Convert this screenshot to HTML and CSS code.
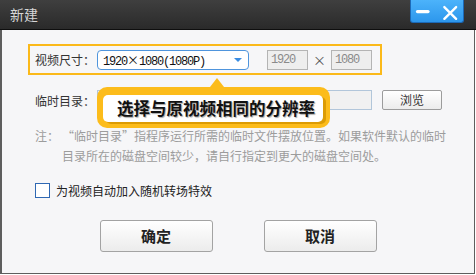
FILE: index.html
```html
<!DOCTYPE html>
<html lang="zh-CN">
<head>
<meta charset="utf-8">
<title>新建</title>
<link rel="stylesheet" href="styles.css">
</head>
<body>
<div class="window">
  <div class="titlebar">
    <span class="title">新建</span>
    <div class="winbtns">
      <svg width="54" height="23" viewBox="0 0 54 23">
        <rect x="6" y="10" width="14" height="3.2" rx="1.6" fill="#fff"/>
        <path d="M35 7 L47 19 M47 7 L35 19" stroke="#fff" stroke-width="2.4" stroke-linecap="round"/>
      </svg>
    </div>
  </div>
  <div class="content">
    <div class="size-row">
      <span class="label">视频尺寸：</span>
      <div class="select">
        <span class="mono">1920<span class="times">×</span>1080(1080P)</span>
        <span class="arrow"></span>
      </div>
      <div class="num mono">1920</div>
      <span class="x-sign">×</span>
      <div class="num mono">1080</div>
    </div>
    <div class="dir-row">
      <span class="label">临时目录：</span>
      <div class="dir-input"></div>
      <div class="browse">浏览</div>
    </div>
    <div class="note">
      <span class="note-label">注：</span>
      <p class="note-text">“临时目录”指程序运行所需的临时文件摆放位置。如果软件默认的临时<br>目录所在的磁盘空间较少，请自行指定到更大的磁盘空间处。</p>
    </div>
    <label class="check-row">
      <span class="checkbox"></span>
      <span>为视频自动加入随机转场特效</span>
    </label>
    <div class="actions">
      <div class="btn">确定</div>
      <div class="btn">取消</div>
    </div>
    <div class="callout">
      <div class="callout-inner">选择与原视频相同的分辨率</div>
    </div>
  </div>
</div>
</body>
</html>
```
FILE: styles.css
```css
* { box-sizing: border-box; }
html, body { margin: 0; padding: 0; background: #ffffff; }
body {
  font-family: "Noto Sans CJK SC", "Liberation Sans", sans-serif;
  font-size: 12px;
  color: #333;
}
.window { width: 476px; height: 275px; }
.titlebar {
  height: 30px;
  display: flex;
  align-items: flex-start;
  background: linear-gradient(#3f3f3f, #2a2a2a);
  border-bottom: 1px solid #0e0e0e;
}
.title {
  margin-left: 10px;
  line-height: 29px;
  font-size: 14px;
  color: #d6d6d6;
}
.winbtns {
  margin-left: auto;
  margin-right: 12px;
  width: 54px;
  height: 23px;
  background: linear-gradient(#4cb3fb, #2d97ec);
  border: 1px solid #1c6ab8;
  border-top: none;
  border-radius: 0 0 3px 3px;
  display: flex;
}
.winbtns svg { display: block; margin-left: -1px; }
.content {
  position: relative;
  width: 475px;
  height: 244px;
  background: #f6f6f8;
  border-left: 2px solid #5e5e5e;
  border-right: 1px solid #5e5e5e;
  border-bottom: 1px solid #5e5e5e;
  padding: 14px 0 0 26px;
}
.size-row {
  width: 354px;
  height: 31px;
  border: 2px solid #fbb91a;
  display: flex;
  align-items: center;
  padding-left: 5px;
}
.label { width: 62px; color: #333; white-space: nowrap; }
.mono {
  font-family: "Liberation Mono", monospace;
  letter-spacing: -1.2px;
  font-size: 12px;
}
.times {
  display: inline-block;
  width: 12px;
  text-align: center;
  letter-spacing: 0;
  font-family: "Noto Sans CJK SC", sans-serif;
}
.select {
  width: 152px;
  height: 20px;
  border: 1px solid #4f95dd;
  border-radius: 4px;
  background: #fff;
  display: flex;
  align-items: center;
  padding-left: 5px;
  color: #111;
}
.arrow {
  margin-left: auto;
  margin-right: 6px;
  width: 0; height: 0;
  border-left: 4px solid transparent;
  border-right: 4px solid transparent;
  border-top: 4px solid #3b8de2;
}
.num {
  width: 41px;
  height: 20px;
  border: 1px solid #b4b4b4;
  background: #eeeeee;
  color: #8a8a8a;
  line-height: 18px;
  padding-left: 3px;
}
.select + .num { margin-left: 18px; }
.x-sign {
  width: 23px;
  text-align: center;
  color: #555;
  font-size: 13px;
}
.dir-row {
  margin-top: 15px;
  height: 20px;
  display: flex;
  align-items: center;
  padding-left: 7px;
}
.dir-input {
  width: 275px;
  height: 20px;
  border: 1px solid #b2c6da;
  background: #f1f1f1;
}
.browse {
  margin-left: 10px;
  width: 60px;
  height: 20px;
  border: 1px solid #9c9c9c;
  border-radius: 2px;
  background: linear-gradient(#ffffff, #ececec);
  text-align: center;
  line-height: 18px;
  color: #333;
}
.note {
  margin-top: 16px;
  padding-left: 7px;
  display: flex;
  color: #9c9c9c;
  line-height: 20px;
}
.note-label { width: 27px; flex: none; }
.note-text { margin: 0; }
.check-row {
  margin-top: 16px;
  padding-left: 7px;
  display: flex;
  align-items: center;
  color: #222;
  height: 16px;
}
.checkbox {
  width: 15px;
  height: 15px;
  border: 1px solid #2f68b3;
  background: #fff;
  margin-right: 6px;
}
.actions {
  margin-top: 22px;
  margin-left: -26px;
  display: flex;
  justify-content: center;
  gap: 51px;
}
.btn {
  width: 113px;
  height: 32px;
  border: 1px solid #a3a3a3;
  border-radius: 3px;
  background: linear-gradient(#ffffff, #ececec);
  text-align: center;
  line-height: 30px;
  font-size: 15px;
  font-weight: bold;
  color: #222;
}
.callout {
  position: absolute;
  left: 95px;
  top: 57px;
  width: 233px;
  height: 41px;
  background: #fcbc1b;
  border-radius: 10px;
  padding: 8px 7px 6px 6px;
}
.callout::before {
  content: "";
  position: absolute;
  left: 113px;
  top: -9px;
  border-left: 7px solid transparent;
  border-right: 7px solid transparent;
  border-bottom: 9px solid #fcbc1b;
}
.callout-inner {
  height: 27px;
  background: #fff;
  border-radius: 5px;
  box-shadow: 3px 2px 0 #dc9c05;
  padding-left: 14px;
  line-height: 27px;
  font-size: 16.5px;
  font-weight: bold;
  color: #111;
  white-space: nowrap;
  text-shadow: 1px 1px 1px rgba(0, 0, 0, 0.35);
}
```
